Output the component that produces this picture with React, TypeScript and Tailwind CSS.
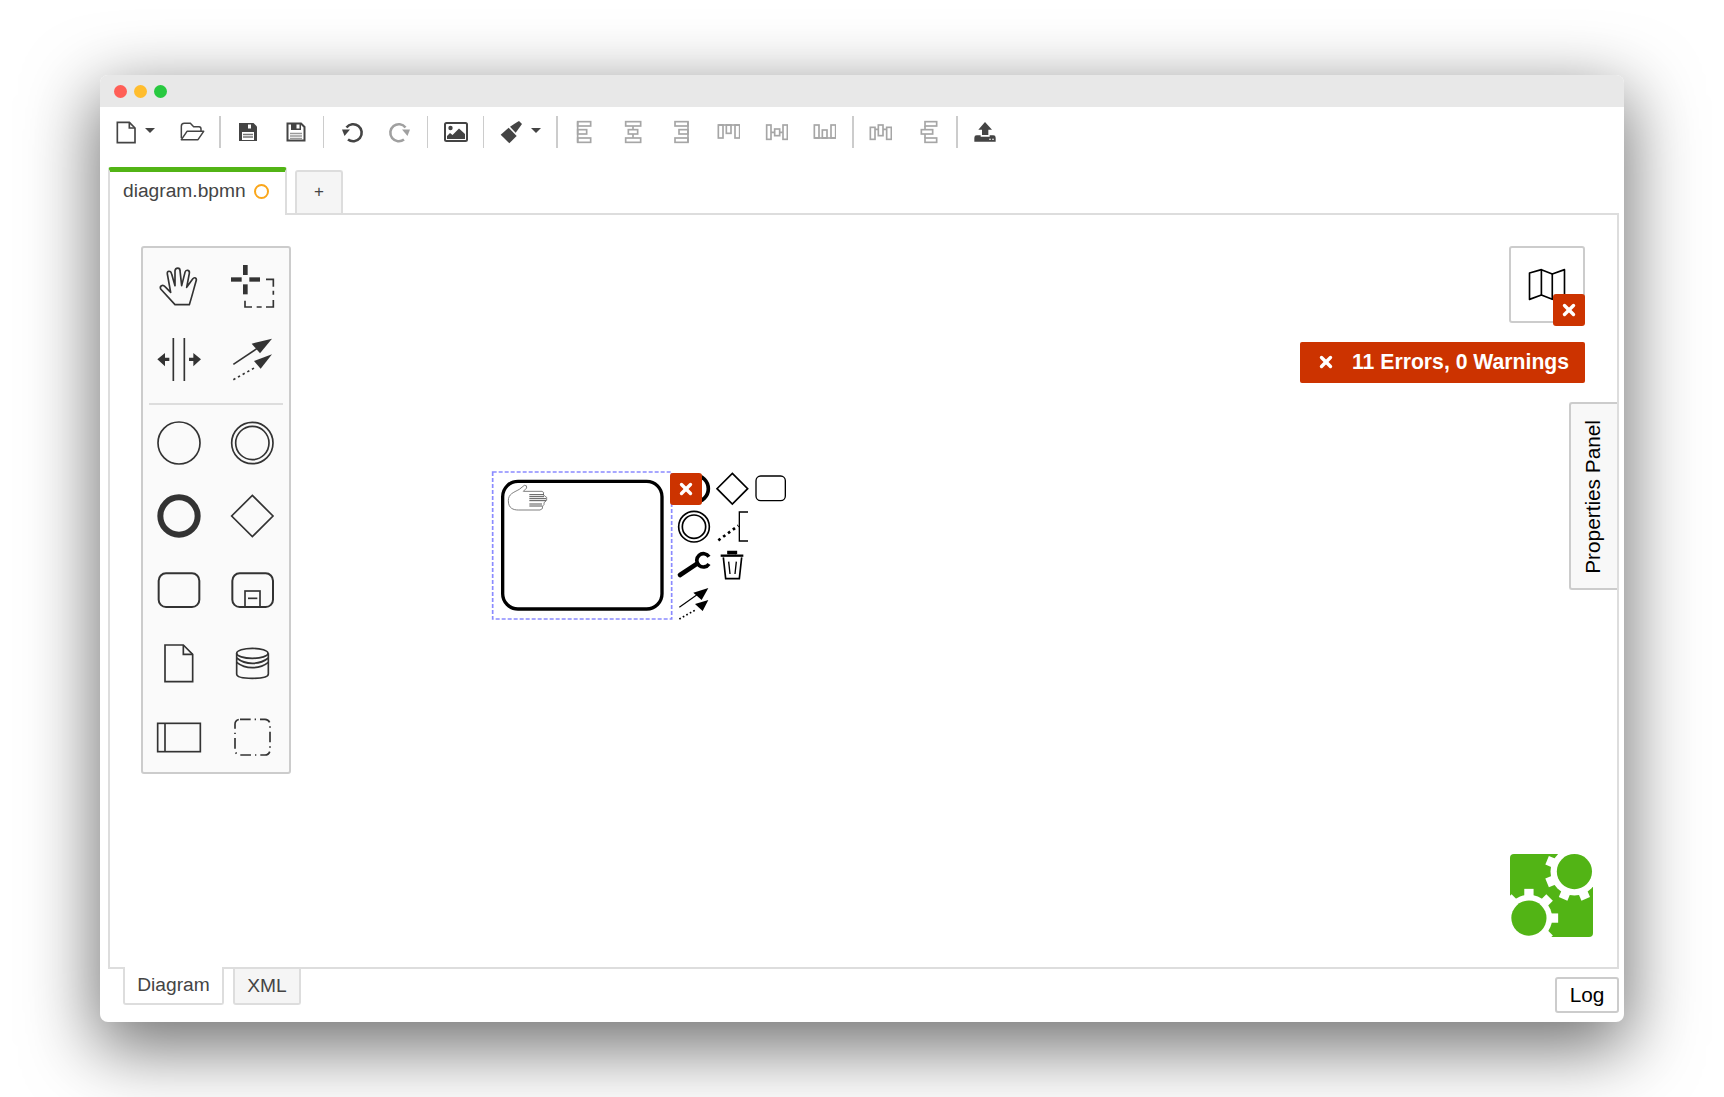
import { X } from "lucide-react";

// Toolbar icons are drawn on 3x coordinates, so 72 units make a 24px icon
function Outlined({ cx, rects, lines = [] }: { cx: number; rects: number[][]; lines?: string[] }) {
  return (
    <svg width="24" height="24" viewBox={`${cx - 36} 90 72 72`} fill="none" stroke="#a6a6a6" strokeWidth="5">
      {rects.map(([x, y, w, h], i) => (
        <rect key={i} x={x} y={y} width={w} height={h} />
      ))}
      {lines.map((d) => (
        <path key={d} d={d} />
      ))}
    </svg>
  );
}

function Caret() {
  return <span className="w-0 h-0 border-x-[5px] border-x-transparent border-t-[5px] border-t-[#444]" />;
}

function Sep({ kind }: { kind?: "thin" | "right" }) {
  return (
    <div className={kind === "right" ? "w-[8px] h-[32px] flex pl-[4px]" : "w-[8px] h-[32px] flex pl-[3px]"}>
      <div className={kind === "thin" ? "w-[1px] bg-[#ccc]" : "w-[2px] bg-[#ccc]"} />
    </div>
  );
}

function Btn({ children }: { children: React.ReactNode }) {
  return <div className="w-[48px] h-[32px] flex items-center justify-center">{children}</div>;
}

function SaveIcon({ outlined }: { outlined?: boolean }) {
  return (
    <svg width="20" height="20" viewBox="0 0 20 20">
      <path
        d={outlined ? "M1.5 1.5H15L18.500 5V18.500H1.500Z" : "M1 1H15.500L19 4.500V19H1Z"}
        fill={outlined ? "#fff" : "#444"}
        stroke="#444"
        strokeWidth={outlined ? 2 : 0}
      />
      {outlined && <rect x="5" y="1" width="10" height="7" fill="#444" />}
      <rect x={outlined ? 10.500 : 10} y="2.500" width="3" height="4" fill="#fff" />
      {!outlined && <rect x="4" y="10" width="12" height="8" fill="#fff" />}
      {!outlined && <path d="M5 12.500H15M5 15H15" stroke="#777" strokeWidth="1.300" />}
      {outlined && <path d="M4 11.500H16M4 14H16M4 16.300H16" stroke="#999" strokeWidth="1.300" />}
    </svg>
  );
}

function UndoIcon({ className }: { className: string }) {
  return (
    <svg width="24" height="24" viewBox="0 0 24 24" className={className}>
      <path d="M6.500 7.500A8.500 8.500 0 1 1 8 19.500" fill="none" stroke="currentColor" strokeWidth="2.600" />
      <path d="M2 9.500H10L4.500 16Z" fill="currentColor" />
    </svg>
  );
}

function Toolbar() {
  return (
    <div className="h-[60px] pl-[8px] pt-[9px] flex items-start bg-white shrink-0">
      <div className="w-[60px] h-[32px] flex items-center pl-[7px]">
        <svg width="22" height="25" viewBox="75 180 66 75" fill="none" stroke="#444" strokeWidth="5">
          <path d="M82 187H118L135 204V248H82Z" />
          <path d="M118 187V204H135" />
        </svg>
        <span className="ml-[8px] -mt-[4px] flex">
          <Caret />
        </span>
      </div>
      <Btn>
        <svg width="26" height="22" viewBox="268 182 78 66" fill="none" stroke="#444" strokeWidth="4.500">
          <path d="M275 234V198Q275 189 284 189H302L312 199H328Q334 199 334 206V212" />
          <path d="M275 238L292 213H342L325 238Z" strokeLinejoin="round" />
        </svg>
      </Btn>
      <Sep />
      <Btn>
        <SaveIcon />
      </Btn>
      <Btn>
        <SaveIcon outlined />
      </Btn>
      <Sep kind="thin" />
      <Btn>
        <UndoIcon className="text-[#444]" />
      </Btn>
      <Btn>
        <UndoIcon className="text-[#a0a0a0] -scale-x-100" />
      </Btn>
      <Sep kind="thin" />
      <Btn>
        <svg width="24" height="20" viewBox="0 0 24 20">
          <rect x="1" y="1" width="22" height="18" rx="1.500" fill="#fff" stroke="#444" strokeWidth="2" />
          <circle cx="6.500" cy="6" r="2.200" fill="#444" />
          <path d="M3 17V14L6 11L8.500 13L15 6.500L21 12V17Z" fill="#444" />
        </svg>
      </Btn>
      <Sep kind="thin" />
      <div className="w-[64px] h-[32px] flex items-center pl-[11px]">
        <svg width="24" height="24" viewBox="12 12 72 72" fill="#444">
          <path d="M17 56L41 35L65 60L43 82Z" />
          <path d="M45 32L62 21L72 15L81 24L74 34L62 50Z" />
        </svg>
        <span className="ml-[8px] -mt-[4px] flex">
          <Caret />
        </span>
      </div>
      <Sep kind="right" />
      <Btn>
        <Outlined cx={102} rects={[[83, 95, 39, 13], [83, 119, 27, 13], [83, 144, 39, 13]]} lines={["M83 95V157"]} />
      </Btn>
      <Btn>
        <Outlined cx={246} rects={[[227, 95, 45, 13], [235, 119, 28, 13], [227, 144, 45, 13]]} lines={["M249 108V119M249 132V144"]} />
      </Btn>
      <Btn>
        <Outlined cx={390} rects={[[375, 95, 39, 13], [387, 119, 27, 13], [375, 144, 39, 13]]} lines={["M414 95V157"]} />
      </Btn>
      <Btn>
        <Outlined cx={534} rects={[[505, 105, 14, 39], [529, 105, 14, 25], [555, 105, 14, 39]]} lines={["M505 105H569"]} />
      </Btn>
      <Btn>
        <Outlined cx={678} rects={[[650, 105, 13, 43], [674, 117, 15, 20], [699, 105, 13, 43]]} lines={["M663 127H674M689 127H699"]} />
      </Btn>
      <Btn>
        <Outlined cx={822} rects={[[793, 105, 14, 39], [817, 120, 14, 24], [843, 105, 14, 39]]} lines={["M793 144H857"]} />
      </Btn>
      <Sep kind="right" />
      <Btn>
        <Outlined cx={990} rects={[[961, 112, 14, 36], [985, 105, 14, 32], [1010, 112, 14, 36]]} lines={["M975 118H985M999 118H1010"]} />
      </Btn>
      <Btn>
        <Outlined cx={1134} rects={[[1125, 95, 35, 13], [1114, 119, 34, 13], [1125, 144, 35, 13]]} lines={["M1125 108V119M1125 132V144"]} />
      </Btn>
      <Sep kind="right" />
      <Btn>
        <svg width="24" height="24" viewBox="1266 90 72 72">
          <path d="M1305 96L1326 119H1315V135H1296V119H1285Z" fill="#444" />
          <path d="M1273 143Q1273 136 1280 136H1292V140H1319V136H1330Q1337 136 1337 143V155H1273Z" fill="#444" />
          <rect x="1318" y="146" width="4" height="4" fill="#fff" />
          <rect x="1327" y="146" width="4" height="4" fill="#fff" />
        </svg>
      </Btn>
    </div>
  );
}

// Palette glyphs share one coordinate space, 150 units make a 50px icon
function Glyph({ x, y, children }: { x: number; y: number; children: React.ReactNode }) {
  return (
    <div className="h-[73.5px] flex items-center justify-center">
      <svg width="50" height="50" viewBox={`${x - 15} ${y - 15} 150 150`} fill="none" stroke="#333" strokeWidth="5">
        {children}
      </svg>
    </div>
  );
}

function Palette() {
  return (
    <div className="absolute left-[31px] top-[31px] w-[150px] h-[528px] pt-[1px] bg-[#fafafa] border-2 border-[#ccc] rounded-[3px]">
      <div className="grid grid-cols-[73px_72px]">
        <Glyph x={90} y={76}>
          <path
            d="M135 192L92 145C88 136 98 130 105 138L122 155L112 100C110 90 122 88 125 100L135 135L135 90C137 80 150 80 150 90L155 135L165 95C168 85 180 88 178 98L170 140L188 115C193 108 202 112 198 122C190 150 185 170 178 192Z"
            strokeLinejoin="round"
          />
        </Glyph>
        <Glyph x={306} y={76}>
          <g fill="#333" stroke="none">
            <rect x="303" y="110" width="32" height="13" />
            <rect x="358" y="110" width="32" height="13" />
            <rect x="339" y="73" width="14" height="30" />
            <rect x="339" y="131" width="14" height="30" />
          </g>
          <path d="M408 116H430V138M430 150V162M430 178V199H408M395 199H380M366 199H345V180" />
        </Glyph>
        <Glyph x={90} y={296}>
          <path d="M130 293V422M163 293V422" />
          <path d="M82 357L105 338V352H118V362H105V378ZM213 357L190 338V352H177V362H190V378Z" fill="#333" stroke="none" />
        </Glyph>
        <Glyph x={306} y={296}>
          <path d="M310 372L385 322" />
          <path d="M426 295L365 310L390 339Z" fill="#333" stroke="none" />
          <path d="M310 418L378 380" strokeDasharray="7 9" />
          <path d="M426 342L372 362L392 385Z" fill="#333" stroke="none" />
        </Glyph>
      </div>
      <div className="mx-[6px] mt-[7px] mb-[1px] h-[2px] bg-[#ddd]" />
      <div className="grid grid-cols-[73px_72px]">
        <Glyph x={90} y={548}>
          <circle cx="147" cy="608" r="63" />
        </Glyph>
        <Glyph x={306} y={548}>
          <circle cx="367" cy="608" r="62" />
          <circle cx="367" cy="608" r="50" />
        </Glyph>
        <Glyph x={90} y={-12}>
          <circle cx="147" cy="48" r="56" strokeWidth="18" />
        </Glyph>
        <Glyph x={306} y={-12}>
          <path d="M367 -14L429 48L367 110L305 48Z" />
        </Glyph>
        <Glyph x={90} y={210}>
          <rect x="86" y="220" width="122" height="101" rx="22" strokeWidth="6" />
        </Glyph>
        <Glyph x={306} y={210}>
          <rect x="307" y="220" width="122" height="101" rx="22" strokeWidth="6" />
          <rect x="345" y="273" width="45" height="48" />
          <path d="M354 295H382" />
        </Glyph>
        <Glyph x={90} y={429}>
          <path d="M105 435H160L188 463V545H105Z" />
          <path d="M160 435V463H188" />
        </Glyph>
        <Glyph x={306} y={429}>
          <ellipse cx="367" cy="460" rx="47" ry="15" />
          <path d="M320 460V522Q320 535 367 535Q415 535 415 522V460" />
          <path d="M320 474Q340 490 367 490Q395 490 415 474M320 487Q340 503 367 503Q395 503 415 487" />
        </Glyph>
        <Glyph x={90} y={651}>
          <rect x="83" y="670" width="128" height="85" />
          <path d="M105 670V755" />
        </Glyph>
        <Glyph x={306} y={651}>
          <rect x="315" y="658" width="105" height="107" rx="15" strokeDasharray="32 12 4 12" />
        </Glyph>
      </div>
    </div>
  );
}

function Node() {
  return (
    <>
      <svg className="absolute left-[370px] top-[245px]" width="320" height="170" viewBox="0 0 960 510" fill="none" stroke="#000">
        <rect x="68" y="64" width="478" height="383" rx="46" strokeWidth="10" />
        <rect x="38" y="36" width="537" height="441" stroke="#8a8aff" strokeWidth="5" strokeDasharray="12 6" />
        <path
          d="M130 94L140 84Q142 75 133 76L118 88C100 98 85 102 85 122C85 145 100 150 115 150H180Q190 148 188 138Q194 134 192 128Q204 122 200 112Q192 108 190 104Q194 96 186 94Z"
          stroke="#666"
          strokeWidth="2.500"
          fill="#fff"
        />
        <path d="M148 104H192M148 110H192M148 116H198M148 122H198M148 132H186M148 138H186" stroke="#555" strokeWidth="3" />
        <circle cx="645" cy="86" r="40" strokeWidth="11" />
        <path d="M757 40L803 86L757 132L711 86Z" strokeWidth="5" />
        <rect x="828" y="48" width="88" height="74" rx="14" strokeWidth="4" />
        <circle cx="642" cy="200" r="46" strokeWidth="5" />
        <circle cx="642" cy="200" r="35" strokeWidth="5" />
        <path d="M715 241L775 197" strokeWidth="8" strokeDasharray="8 10" />
        <path d="M804 156H778V243H804" strokeWidth="4" />
        <path d="M600 345L648 313" strokeWidth="14" strokeLinecap="round" />
        <path d="M687 290A20 20 0 1 0 687 312" strokeWidth="11" />
        <path d="M722 287H790" strokeWidth="7" />
        <path d="M745 283V276H768V283" fill="#000" strokeWidth="7" />
        <path d="M730 292L737 356H778L785 292" strokeWidth="5" />
        <path d="M746 305L750 342M769 305L765 342" strokeWidth="4" />
        <path d="M598 442L650 405" strokeWidth="3.500" />
        <path d="M685 384L640 398L665 420Z" fill="#000" stroke="none" />
        <path d="M598 477L648 449" strokeWidth="5" strokeDasharray="5 7" />
        <path d="M685 420L645 432L668 453Z" fill="#000" stroke="none" />
      </svg>
      <div className="absolute left-[560px] top-[258px] w-[32px] h-[32px] rounded-[3px] bg-[#cc3300] flex items-center justify-center">
        <X size={18} color="#fff" strokeWidth={4.500} />
      </div>
    </>
  );
}

function Logo() {
  const green = "#52b415";
  return (
    <svg className="absolute right-[24px] bottom-[30px]" width="83" height="83" viewBox="90 72 250 250">
      <rect x="90" y="72" width="250" height="250" rx="12" fill={green} />
      <rect x="284" y="72" width="56" height="53" fill="#fff" />
      <rect x="90" y="265" width="57" height="57" fill="#fff" />
      {[22.500, 67.500, 112.500, 157.500, 202.500, 247.500, 292.500, 337.500].map((a) => (
        <rect key={a} x="339" y="111" width="34" height="28" fill="#fff" transform={`rotate(${a} 284 125)`} />
      ))}
      <circle cx="284" cy="125" r="72" fill="#fff" />
      <circle cx="284" cy="125" r="53" fill={green} />
      {[0, 45, 90, 135, 180, 225, 270, 315].map((a) => (
        <rect key={a} x="203" y="251" width="32" height="28" fill="#fff" transform={`rotate(${a} 147 265)`} />
      ))}
      <circle cx="147" cy="265" r="70" fill="#fff" />
      <circle cx="147" cy="265" r="53" fill={green} />
    </svg>
  );
}

export default function App() {
  return (
    <div className="w-[1724px] h-[1097px] bg-white overflow-hidden pt-[75px] pl-[100px] font-['Liberation_Sans',Arial,sans-serif]">
      <div className="w-[1524px] h-[947px] bg-white rounded-[8px] flex flex-col shadow-[0_22px_70px_4px_rgba(0,0,0,0.56)]">
        <div className="h-[32px] bg-[#e8e8e8] rounded-t-[8px] flex items-center pl-[14px] gap-[7px] shrink-0">
          <span className="w-[13px] h-[13px] rounded-full bg-[#ff5f57]" />
          <span className="w-[13px] h-[13px] rounded-full bg-[#ffbd2e]" />
          <span className="w-[13px] h-[13px] rounded-full bg-[#28c940]" />
        </div>

        <Toolbar />

        <div className="h-[46px] ml-[8px] flex items-end shrink-0 relative z-10">
          <div className="w-[179px] h-[48px] -mb-[2px] bg-white border-x-2 border-[#ddd] border-t-[5px] border-t-[#52b415] rounded-t-[3px] flex items-center pl-[13px] pb-[4px] text-[19.200px] text-[#444]">
            diagram.bpmn
            <span className="ml-[8px] w-[15px] h-[15px] rounded-full border-2 border-[#faa61a]" />
          </div>
          <div className="ml-[8px] w-[48px] h-[43px] pb-[2px] bg-[#f5f5f5] border-2 border-b-0 border-[#ddd] rounded-t-[3px] flex items-center justify-center text-[17px] text-[#444]">
            +
          </div>
        </div>

        <div className="flex-1 ml-[8px] mr-[5px] border-2 border-[#ddd] bg-white relative">
          <Palette />
          <Node />

          <div className="absolute top-[31px] right-[32px] flex flex-col items-end gap-[19px]">
            <div className="relative w-[76px] h-[77px] bg-white border-2 border-[#ccc] rounded-[3px] flex items-center justify-center">
              <svg width="40" height="33" viewBox="742 110 120 100" fill="none" stroke="#000" strokeWidth="5" strokeLinejoin="round">
                <path d="M749 125L785 115L818 128L855 115V190L818 205L785 192L749 205Z" />
                <path d="M785 115V192M818 128V205" />
              </svg>
              <div className="absolute -right-[2px] -bottom-[5px] w-[32px] h-[32px] rounded-[3px] bg-[#cc3300] flex items-center justify-center">
                <X size={18} color="#fff" strokeWidth={4.500} />
              </div>
            </div>
            <div className="w-[285px] h-[41px] pb-[1px] rounded-[2px] bg-[#cc3300] flex items-center pl-[17px] text-white font-bold text-[21.200px]">
              <X size={18} color="#fff" strokeWidth={4.500} />
              <span className="ml-[17px]">11 Errors, 0 Warnings</span>
            </div>
          </div>

          <div className="absolute top-[187px] right-0 w-[48px] h-[188px] pr-[2px] pt-[2px] bg-[#f8f8f8] border-2 border-r-0 border-[#ccc] rounded-l-[3px] flex items-center justify-center">
            <span className="[writing-mode:vertical-rl] rotate-180 text-[20.800px] text-black whitespace-nowrap">Properties Panel</span>
          </div>

          <Logo />
        </div>

        <div className="h-[53px] ml-[8px] mr-[5px] flex items-start shrink-0">
          <div className="ml-[15px] -mt-[2px] w-[101px] h-[38px] bg-white border-2 border-t-0 border-[#ddd] rounded-b-[3px] flex items-center justify-center text-[19.200px] text-[#444] relative">
            Diagram
          </div>
          <div className="ml-[9px] w-[68px] h-[36px] bg-[#f5f5f5] border-2 border-t-0 border-[#ddd] rounded-b-[3px] flex items-center justify-center text-[19.200px] text-[#444]">
            XML
          </div>
          <div className="ml-auto mt-[8px] w-[64px] h-[36px] bg-white border-2 border-[#ccc] rounded-[3px] flex items-center justify-center text-[20.800px] text-black">
            Log
          </div>
        </div>
      </div>
    </div>
  );
}
